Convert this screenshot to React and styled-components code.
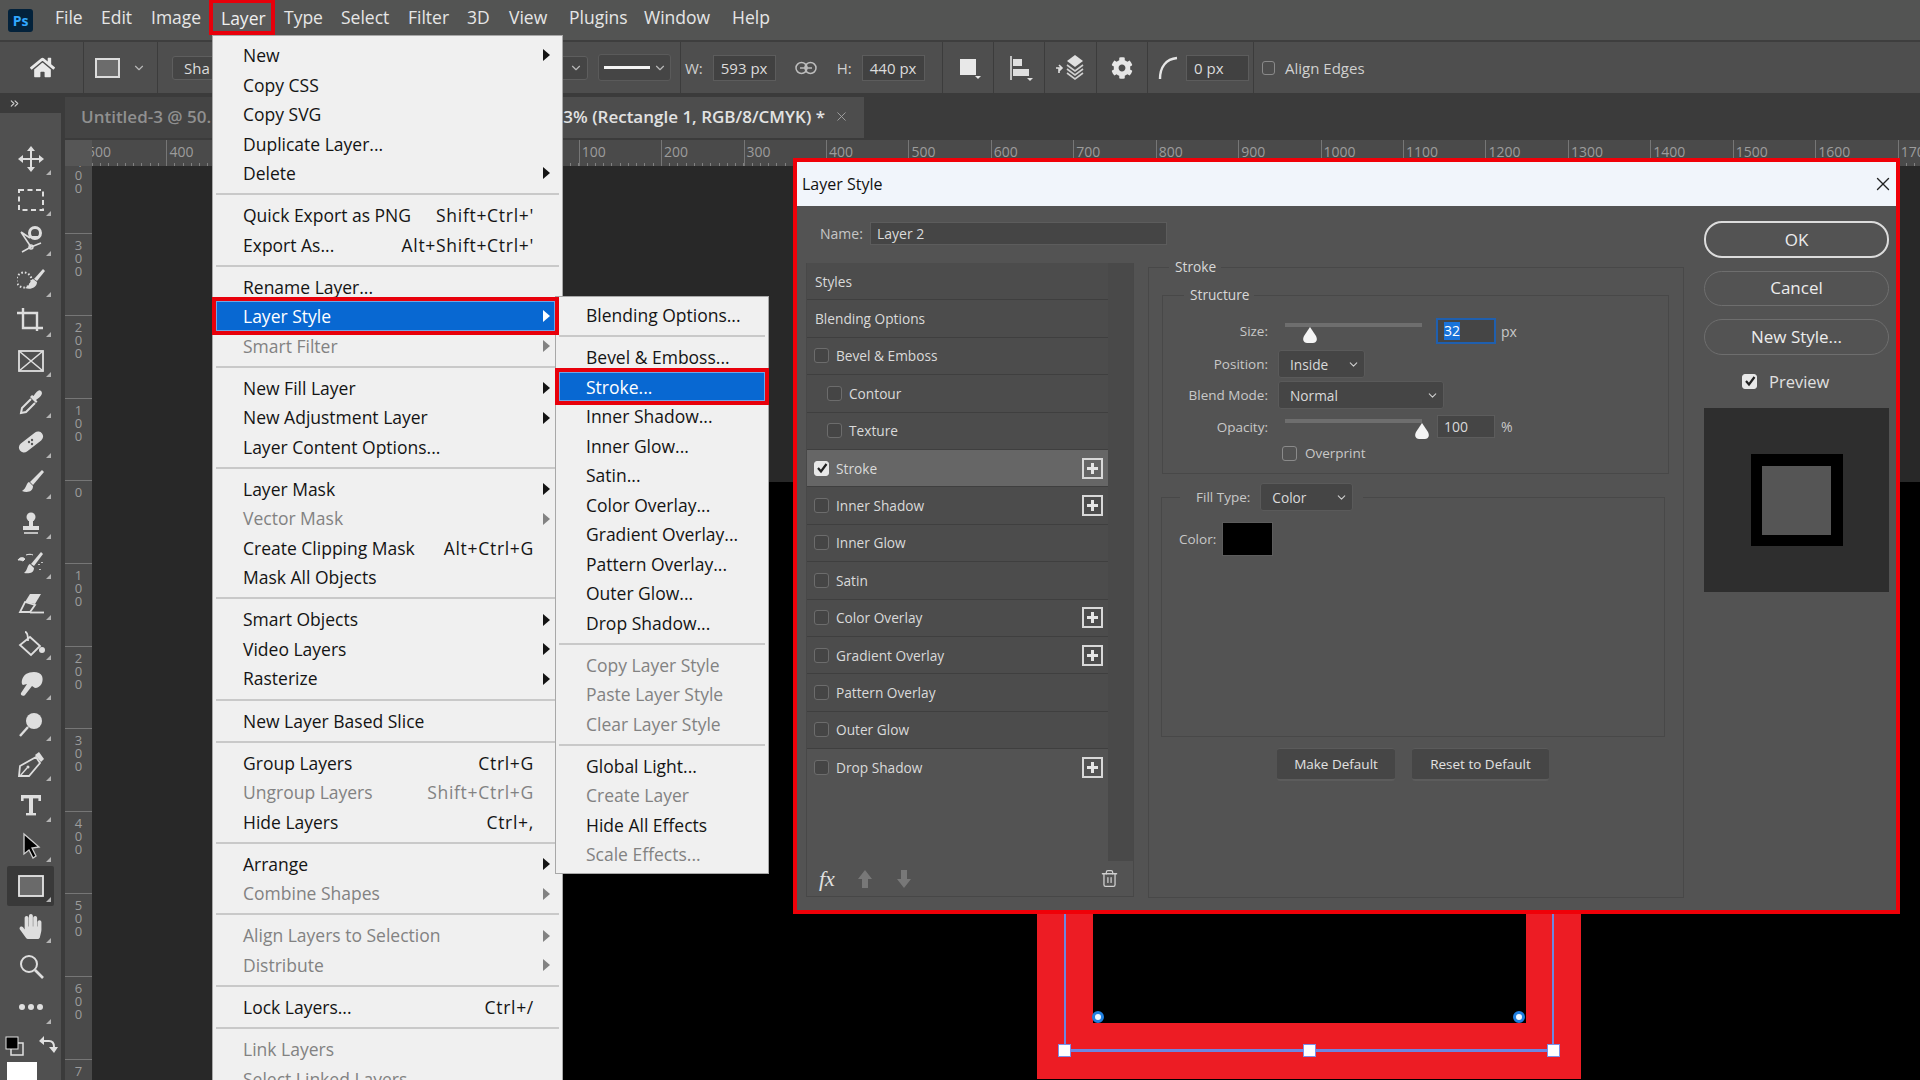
import styled, { createGlobalStyle } from "styled-components";
import { ChevronDown, ChevronsRight, X, Trash2 } from "lucide-react";
import { FaHome, FaCog, FaHandPaper } from "react-icons/fa";

const FONT = `"Open Sans", "Noto Sans", sans-serif`;

const GlobalStyle = createGlobalStyle`
  html, body { margin: 0; padding: 0; background: #282828; }
  * { box-sizing: border-box; }
`;

// data
const topMenu = [
  ["File", 46], ["Edit", 50], ["Image", 67], ["Layer", 66], ["Type", 57],
  ["Select", 67], ["Filter", 59], ["3D", 42], ["View", 60], ["Plugins", 75],
  ["Window", 88], ["Help", 50],
];

const layerMenu = [
  { t: "New", arrow: true }, { t: "Copy CSS" }, { t: "Copy SVG" }, { t: "Duplicate Layer..." },
  { t: "Delete", arrow: true }, "-",
  { t: "Quick Export as PNG", key: "Shift+Ctrl+'" }, { t: "Export As...", key: "Alt+Shift+Ctrl+'" }, "-",
  { t: "Rename Layer..." }, { t: "Layer Style", arrow: true, on: true }, { t: "Smart Filter", arrow: true, off: true }, "-",
  { t: "New Fill Layer", arrow: true }, { t: "New Adjustment Layer", arrow: true }, { t: "Layer Content Options..." }, "-",
  { t: "Layer Mask", arrow: true }, { t: "Vector Mask", arrow: true, off: true },
  { t: "Create Clipping Mask", key: "Alt+Ctrl+G" }, { t: "Mask All Objects" }, "-",
  { t: "Smart Objects", arrow: true }, { t: "Video Layers", arrow: true }, { t: "Rasterize", arrow: true }, "-",
  { t: "New Layer Based Slice" }, "-",
  { t: "Group Layers", key: "Ctrl+G" }, { t: "Ungroup Layers", key: "Shift+Ctrl+G", off: true }, { t: "Hide Layers", key: "Ctrl+," }, "-",
  { t: "Arrange", arrow: true }, { t: "Combine Shapes", arrow: true, off: true }, "-",
  { t: "Align Layers to Selection", arrow: true, off: true }, { t: "Distribute", arrow: true, off: true }, "-",
  { t: "Lock Layers...", key: "Ctrl+/" }, "-",
  { t: "Link Layers", off: true }, { t: "Select Linked Layers", off: true },
];

const styleMenu = [
  { t: "Blending Options..." }, "-",
  { t: "Bevel & Emboss..." }, { t: "Stroke...", on: true }, { t: "Inner Shadow..." }, { t: "Inner Glow..." },
  { t: "Satin..." }, { t: "Color Overlay..." }, { t: "Gradient Overlay..." }, { t: "Pattern Overlay..." },
  { t: "Outer Glow..." }, { t: "Drop Shadow..." }, "-",
  { t: "Copy Layer Style", off: true }, { t: "Paste Layer Style", off: true }, { t: "Clear Layer Style", off: true }, "-",
  { t: "Global Light..." }, { t: "Create Layer", off: true }, { t: "Hide All Effects" }, { t: "Scale Effects...", off: true },
];

const styleRows = [
  { t: "Styles", plain: true }, { t: "Blending Options", plain: true },
  { t: "Bevel & Emboss" }, { t: "Contour", indent: true }, { t: "Texture", indent: true },
  { t: "Stroke", on: true, plus: true }, { t: "Inner Shadow", plus: true }, { t: "Inner Glow" }, { t: "Satin" },
  { t: "Color Overlay", plus: true }, { t: "Gradient Overlay", plus: true }, { t: "Pattern Overlay" },
  { t: "Outer Glow" }, { t: "Drop Shadow", plus: true },
];

// labels that sit behind the open menu are left out
const hTicks = ["500", "400", "", "", "", "", "100", "200", "300", "400", "500", "600", "700", "800", "900", "1000", "1100", "1200", "1300", "1400", "1500", "1600", "1700", "1800"];
const vTicks = ["400", "300", "200", "100", "0", "100", "200", "300", "400", "500", "600", "700"];

// tool icons, 28x28 box
const C = "#dedede";
const toolIcons = {
  move: (
    <>
      <path d="M14 5v18M5 14h18" stroke={C} strokeWidth="2" />
      <path d="M14 1l4 5h-8zM14 27l4-5h-8zM1 14l5-4v8zM27 14l-5-4v8z" fill={C} />
    </>
  ),
  marquee: <rect x="2" y="4" width="24" height="20" fill="none" stroke={C} strokeWidth="2" strokeDasharray="5 3.5" />,
  object: (
    <>
      <path d="M4 6L14 21L5 26M4 6L13 12M14 21L24 17" fill="none" stroke={C} strokeWidth="1.6" />
      <circle cx="18" cy="7" r="5.5" fill="none" stroke={C} strokeWidth="3" />
      <path d="M13 10h10v2H13z" fill={C} />
      <circle cx="14" cy="21" r="2" fill="none" stroke={C} strokeWidth="1.4" />
    </>
  ),
  quick: (
    <>
      <circle cx="7" cy="14" r="7.5" fill="none" stroke={C} strokeWidth="2" strokeDasharray="1.6 2" />
      <path d="M26 3l2 2-8 10-3-2z" fill={C} />
      <path d="M16 13c-3 1-3 7-8 9 5 2 12 0 12-6z" fill={C} />
    </>
  ),
  crop: <path d="M0 6H20V24M6 1V21H26" fill="none" stroke={C} strokeWidth="2.4" />,
  frame: (
    <>
      <rect x="2" y="4" width="24" height="20" fill="none" stroke={C} strokeWidth="1.8" />
      <path d="M2 4L26 24M26 4L2 24" stroke={C} strokeWidth="1.6" />
    </>
  ),
  dropper: (
    <>
      <path d="M14 11L5 20L4 25L9 24L18 15" fill="none" stroke={C} strokeWidth="2" />
      <path d="M13 9L19 15L20.5 13.5L19 12C25 8 26 5 24 3C22 1 20 3 16.5 8L15 7Z" fill={C} />
    </>
  ),
  bandage: (
    <>
      <rect x="0" y="9" width="28" height="10" rx="5" fill={C} transform="rotate(-38 14 14)" />
      <circle cx="12" cy="14" r="1.2" fill="#555" />
      <circle cx="15" cy="12" r="1.2" fill="#555" />
      <circle cx="15" cy="16" r="1.2" fill="#555" />
    </>
  ),
  brush: (
    <>
      <path d="M25 2l2 2-11 13-3-3z" fill={C} />
      <path d="M12 14c-3 1-2 6-7 9 5 2 11 1 11-5z" fill={C} />
    </>
  ),
  stamp: (
    <>
      <circle cx="14" cy="8" r="4.5" fill={C} />
      <path d="M12 11h4v6h6v4H6v-4h6z" fill={C} />
      <path d="M7 24h14" stroke={C} strokeWidth="1.6" />
    </>
  ),
  history: (
    <>
      <path d="M24 3l2 2-9 12-3-2z" fill={C} />
      <path d="M13 15c-3 1-2 6-6 9 5 1 10 0 10-5z" fill={C} />
      <path d="M1 11c2-3 5-3 7-1l-2 2c-2-1-3-1-5-1zM9 6c3-1 5-1 7 0" fill={C} stroke={C} strokeWidth="1" />
      <path d="M22 15v1M25 13v1M23 20v1" stroke={C} strokeWidth="1.6" />
    </>
  ),
  eraser: (
    <>
      <path d="M13 5L24 5L18 15L8 13Z" fill={C} />
      <path d="M8 13L18 16L13 23H3Z" fill="none" stroke={C} strokeWidth="1.8" />
      <path d="M13 23.5H27" stroke={C} strokeWidth="1.8" />
    </>
  ),
  bucket: (
    <>
      <path d="M13 7L23 16L14 25L3 15Z" fill="none" stroke={C} strokeWidth="1.8" />
      <path d="M8 2c3 0 3 5 3 9" fill="none" stroke={C} strokeWidth="1.8" />
      <circle cx="25" cy="20" r="3" fill={C} />
    </>
  ),
  smudge: (
    <path d="M9 4c5-3 14-3 16 2 2 5-1 12-7 12l-3-2-7 9c-2 2-5 0-4-2l6-9-4 1C4 14 4 8 9 4z" fill={C} />
  ),
  dodge: (
    <>
      <circle cx="17" cy="10" r="8" fill={C} />
      <path d="M11 16L3 25" stroke={C} strokeWidth="2.4" />
    </>
  ),
  pen: (
    <>
      <path d="M19 6L3 15L2 25L12 25L23 12Z" fill="none" stroke={C} strokeWidth="1.8" />
      <path d="M18 4L22 1L27 8L24 11Z" fill={C} />
      <path d="M3 25L10 17" stroke={C} strokeWidth="1.4" />
      <circle cx="11" cy="16" r="1.5" fill={C} />
    </>
  ),
  type: (
    <>
      <rect x="4" y="4" width="20" height="3.4" fill={C} />
      <rect x="4" y="4" width="2.6" height="6" fill={C} />
      <rect x="21.4" y="4" width="2.6" height="6" fill={C} />
      <rect x="12" y="4" width="4" height="20" fill={C} />
      <rect x="9" y="22" width="10" height="2.4" fill={C} />
    </>
  ),
  path: <path d="M7 2L22 15L15 16L19 24L16 26L12 18L7 22Z" fill="#000" stroke="#cfcfcf" strokeWidth="1.3" />,
  rect: <rect x="2" y="4" width="24" height="20" fill="#6a6a6a" stroke="#e6e6e6" strokeWidth="1.8" />,
  zoom: (
    <>
      <circle cx="12" cy="11" r="8" fill="none" stroke={C} strokeWidth="2" />
      <path d="M18 17L26 25" stroke={C} strokeWidth="2.6" />
    </>
  ),
  more: (
    <>
      <circle cx="5" cy="14" r="3" fill={C} />
      <circle cx="14" cy="14" r="3" fill={C} />
      <circle cx="23" cy="14" r="3" fill={C} />
    </>
  ),
};

const tools = [
  "move", "marquee", "object", "quick", "crop", "frame", "dropper", "bandage", "brush", "stamp", "history",
  "eraser", "bucket", "smudge", "dodge", "pen", "type", "path", "rect", "hand", "zoom", "more",
];

const Menu = ({ items, as: Comp }) => (
  <Comp>
    {items.map((it, i) =>
      it === "-" ? (
        <MenuSep key={i} />
      ) : (
        <MenuItem key={i} $on={it.on} $off={it.off}>
          <span>{it.t}</span>
          {it.key && <ShortcutKey>{it.key}</ShortcutKey>}
          {it.arrow && <MenuArrow $on={it.on} $off={it.off} />}
        </MenuItem>
      )
    )}
  </Comp>
);

const Thumb = ({ at }) => (
  <ThumbIcon $at={at} width="16" height="17" viewBox="0 0 16 17">
    <path d="M8 0L14 9C16 13 14 16 11 16H5C2 16 0 13 2 9Z" fill="#f4f4f4" />
  </ThumbIcon>
);

const Select = ({ w, children }) => (
  <SelectBox $w={w}>
    {children}
    <ChevronDown size={13} color="#cfcfcf" />
  </SelectBox>
);

export default function App() {
  return (
    <Page>
      <GlobalStyle />

      <MenuBar>
        <PsLogo>Ps</PsLogo>
        {topMenu.map(([name, w]) => (
          <TopItem key={name} $w={w} $on={name === "Layer"}>
            {name}
          </TopItem>
        ))}
      </MenuBar>

      <OptionsBar>
        <OptGroup $w={84} $pad={30}>
          <FaHome size={25} color="#e8e8e8" />
        </OptGroup>
        <OptGroup $w={74} $pad={11}>
          <ShapeSwatch />
          <ChevronDown size={14} color="#b8b8b8" />
        </OptGroup>
        <OptGroup $w={523} $pad={14}>
          <ShapeSelect>
            Sha
            <ChevronDown size={14} color="#b8b8b8" />
          </ShapeSelect>
          <LineSelect>
            <LineSample />
            <ChevronDown size={14} color="#b8b8b8" />
          </LineSelect>
        </OptGroup>
        <OptGroup $w={262} $pad={4}>
          <OptLabel>W:</OptLabel>
          <OptInput>593 px</OptInput>
          <LinkIcon width="24" height="14" viewBox="0 0 24 14">
            <circle cx="7.5" cy="7" r="5.5" fill="none" stroke="#bdbdbd" strokeWidth="1.5" />
            <circle cx="16.5" cy="7" r="5.5" fill="none" stroke="#bdbdbd" strokeWidth="1.5" />
            <path d="M6 7h12" stroke="#bdbdbd" strokeWidth="1.5" />
          </LinkIcon>
          <OptLabel>H:</OptLabel>
          <OptInput>440 px</OptInput>
        </OptGroup>
        <OptGroup $w={51} $pad={16}>
          <svg width="24" height="22" viewBox="0 0 24 22">
            <rect x="1" y="2" width="16" height="16" fill="#e8e8e8" />
            <path d="M16 19h6l-3 3z" fill="#e8e8e8" />
          </svg>
        </OptGroup>
        <OptGroup $w={51} $pad={16}>
          <svg width="24" height="26" viewBox="0 0 24 26">
            <path d="M1 1v24" stroke="#e0e0e0" strokeWidth="1.6" />
            <rect x="3" y="4" width="9" height="7" fill="#e0e0e0" />
            <rect x="3" y="14" width="16" height="7" fill="#e0e0e0" />
            <path d="M17 23h6l-3 3z" fill="#e0e0e0" />
          </svg>
        </OptGroup>
        <OptGroup $w={52} $pad={10}>
          <svg width="32" height="30" viewBox="0 0 32 30">
            <path d="M1 15h6M4 12l3 3-3 3M4 15v5" stroke="#e0e0e0" strokeWidth="1.6" fill="none" />
            <path d="M20 2l8 6-8 6-8-6z" fill="#e0e0e0" />
            <path d="M12 12l8 6 8-6M12 16l8 6 8-6M12 20l8 6 8-6" stroke="#d0d0d0" strokeWidth="1.6" fill="none" />
          </svg>
        </OptGroup>
        <OptGroup $w={51} $pad={14}>
          <FaCog size={22} color="#e6e6e6" />
        </OptGroup>
        <OptGroup $w={106} $pad={10}>
          <svg width="20" height="24" viewBox="0 0 20 24">
            <path d="M2 23C2 11 8 3 19 2" fill="none" stroke="#e6e6e6" strokeWidth="2.4" />
          </svg>
          <OptInput $w={63} $ml={8}>
            0 px
          </OptInput>
        </OptGroup>
        <OptGroup $pad={8} $last>
          <OptCheck />
          <OptLabel $ml={10}>Align Edges</OptLabel>
        </OptGroup>
      </OptionsBar>

      <Workspace>
        <ToolColumn>
          <ToolHeader>
            <ChevronsRight size={13} color="#d0d0d0" />
          </ToolHeader>
          <ToolPanel>
            {tools.map((name) => (
              <ToolButton key={name} $on={name === "rect"} $noCorner={name === "zoom"}>
                {name === "hand" ? (
                  <FaHandPaper size={25} color={C} />
                ) : (
                  <svg width="28" height="28" viewBox="0 0 28 28">
                    {toolIcons[name]}
                  </svg>
                )}
              </ToolButton>
            ))}
            <SwatchArea>
              <SwatchTop>
                <svg width="20" height="20" viewBox="0 0 20 20">
                  <rect x="6" y="7" width="12" height="12" fill="none" stroke="#e0e0e0" strokeWidth="1.5" />
                  <rect x="1" y="1" width="12" height="12" fill="#000" stroke="#e0e0e0" strokeWidth="1" />
                </svg>
                <svg width="20" height="20" viewBox="0 0 20 20">
                  <path d="M3 5h8c3 0 5 2 5 6" fill="none" stroke="#e0e0e0" strokeWidth="2" />
                  <path d="M6 0L1 5l5 4zM11 11l5 6 4-6z" fill="#e0e0e0" />
                </svg>
              </SwatchTop>
              <ForeSwatch />
            </SwatchArea>
          </ToolPanel>
        </ToolColumn>

        <MainColumn>
          <TabRow>
            <DocTab $w={405} $dim>
              Untitled-3 @ 50.
            </DocTab>
            <DocTab $w={394} $end>
              3% (Rectangle 1, RGB/8/CMYK) *
              <X size={15} color="#a8a8a8" strokeWidth={1.4} />
            </DocTab>
          </TabRow>

          <RulerRow>
            <RulerCorner />
            <HRuler>
              {hTicks.map((n, i) => (
                <HTick key={i}>{n}</HTick>
              ))}
            </HRuler>
          </RulerRow>

          <CanvasRow>
            <VRuler>
              {vTicks.map((n, i) => (
                <VTick key={i}>
                  {n.split("").map((d, j) => (
                    <span key={j}>{d}</span>
                  ))}
                </VTick>
              ))}
            </VRuler>
            <Canvas>
              <Artboard>
                <RedFrame>
                  <PathLine />
                  <PathHandle $at="left" />
                  <PathHandle $at="mid" />
                  <PathHandle $at="right" />
                  <Corner $at="left" />
                  <Corner $at="right" />
                </RedFrame>
              </Artboard>
            </Canvas>
          </CanvasRow>
        </MainColumn>
      </Workspace>

      <Menu items={layerMenu} as={LayerMenuBox} />
      <Menu items={styleMenu} as={StyleMenuBox} />

      <Dialog>
        <DialogTitle>
          Layer Style
          <X size={22} color="#222" strokeWidth={1.5} />
        </DialogTitle>
        <DialogBody>
          <LeftColumn>
            <NameRow>
              <NameLabel>Name:</NameLabel>
              <NameInput>Layer 2</NameInput>
            </NameRow>
            <StyleList>
              <ListTop>
                <Rows>
                  {styleRows.map((r) => (
                    <StyleRow key={r.t} $on={r.on} $plain={r.plain} $indent={r.indent}>
                      {!r.plain && <Check $on={r.on}>{r.on && <CheckMark />}</Check>}
                      <RowText>{r.t}</RowText>
                      {r.plus && <PlusBox />}
                    </StyleRow>
                  ))}
                </Rows>
                <ScrollTrack />
              </ListTop>
              <ListFooter>
                <FxText>fx</FxText>
                <FooterArrow width="16" height="20" viewBox="0 0 16 20" $ml={22}>
                  <path d="M8 1l7 9h-4v9H5v-9H1z" fill="#787878" />
                </FooterArrow>
                <FooterArrow width="16" height="20" viewBox="0 0 16 20" $ml={23}>
                  <path d="M8 19l7-9h-4V1H5v9H1z" fill="#787878" />
                </FooterArrow>
                <TrashSlot>
                  <Trash2 size={19} color="#d0d0d0" strokeWidth={1.6} />
                </TrashSlot>
              </ListFooter>
            </StyleList>
          </LeftColumn>

          <StrokeSet>
            <SetLegend $ml={6}>Stroke</SetLegend>
            <StructureSet>
              <SetLegend $ml={20}>Structure</SetLegend>
              <FormRow $h={24} $top={14}>
                <FormLabel>Size:</FormLabel>
                <Slider>
                  <Thumb at={17} />
                </Slider>
                <ValueBox $sel>
                  <Selected>32</Selected>
                </ValueBox>
                <Unit>px</Unit>
              </FormRow>
              <FormRow $h={28} $top={7}>
                <FormLabel>Position:</FormLabel>
                <Select w={87}>Inside</Select>
              </FormRow>
              <FormRow $h={28} $top={3}>
                <FormLabel>Blend Mode:</FormLabel>
                <Select w={166}>Normal</Select>
              </FormRow>
              <FormRow $h={23} $top={6}>
                <FormLabel>Opacity:</FormLabel>
                <Slider>
                  <Thumb at={129} />
                </Slider>
                <ValueBox>100</ValueBox>
                <Unit>%</Unit>
              </FormRow>
              <FormRow $h={22} $top={4}>
                <FormLabel />
                <SmallCheck />
                <FormText>Overprint</FormText>
              </FormRow>
            </StructureSet>

            <FillSet>
              <FillLegend>
                <FormText>Fill Type:</FormText>
                <Select w={93}>Color</Select>
              </FillLegend>
              <ColorRow>
                <FormText>Color:</FormText>
                <ColorSwatch />
              </ColorRow>
            </FillSet>

            <DefaultsRow>
              <FlatButton $w={118}>Make Default</FlatButton>
              <FlatButton $w={137}>Reset to Default</FlatButton>
            </DefaultsRow>
          </StrokeSet>

          <RightColumn>
            <PillButton $h={37} $primary>
              OK
            </PillButton>
            <PillButton $h={35}>Cancel</PillButton>
            <PillButton $h={36}>New Style...</PillButton>
            <PreviewRow>
              <Check $on>
                <CheckMark />
              </Check>
              Preview
            </PreviewRow>
            <PreviewBox>
              <PreviewShape />
            </PreviewBox>
          </RightColumn>
        </DialogBody>
      </Dialog>
    </Page>
  );
}

const CheckMark = () => (
  <svg width="12" height="12" viewBox="0 0 12 12">
    <path d="M2 6l3 3.5L10.5 2" fill="none" stroke="#222" strokeWidth="2.2" />
  </svg>
);

const Page = styled.div`
  position: relative;
  width: 1920px;
  height: 1080px;
  overflow: hidden;
  display: flex;
  flex-direction: column;
  background: #3d3d3d;
  font-family: ${FONT};
`;

const MenuBar = styled.div`
  height: 42px;
  flex: none;
  display: flex;
  align-items: center;
  padding-left: 8px;
  background: #535453;
  border-bottom: 2px solid #3e3e3e;
`;

const PsLogo = styled.div`
  width: 25px;
  height: 23px;
  margin-right: 13px;
  border-radius: 3px;
  background: #03223b;
  color: #31a8ff;
  font-size: 14px;
  font-weight: 700;
  line-height: 23px;
  text-align: center;
`;

const TopItem = styled.div`
  width: ${(p) => p.$w}px;
  height: 35px;
  margin-top: -6px;
  padding-left: 9px;
  color: #e6e6e6;
  font-size: 17.5px;
  line-height: 35px;
  ${(p) =>
    p.$on &&
    `border: 4px solid #e8000b; border-top-width: 3px; line-height: 30px; background: #5a5a5a; color: #f0f0f0; padding-left: 8px;`}
`;

const OptionsBar = styled.div`
  height: 51px;
  flex: none;
  display: flex;
  background: #4e4e4e;
`;

const OptGroup = styled.div`
  flex: ${(p) => (p.$w ? "none" : 1)};
  width: ${(p) => (p.$w ? `${p.$w}px` : "auto")};
  display: flex;
  align-items: center;
  padding-left: ${(p) => p.$pad}px;
  ${(p) => !p.$last && `border-right: 1px solid #3c3c3c;`}
`;

const ShapeSwatch = styled.div`
  width: 25px;
  height: 20px;
  margin-right: 12px;
  background: #6c6c6c;
  border: 2px solid #dcdcdc;
`;

const ShapeSelect = styled.div`
  width: 416px;
  height: 24px;
  display: flex;
  align-items: center;
  justify-content: space-between;
  padding: 0 4px 0 11px;
  border: 1px solid #5e5e5e;
  border-radius: 3px;
  background: #454545;
  color: #dcdcdc;
  font-size: 15px;
`;

const LineSelect = styled.div`
  width: 73px;
  height: 27px;
  margin-left: 10px;
  display: flex;
  align-items: center;
  padding-left: 5px;
  gap: 3px;
  border: 1px solid #5a5a5a;
  border-radius: 3px;
  background: #454545;
`;

const LineSample = styled.div`
  width: 46px;
  height: 3px;
  background: #f4f4f4;
`;

const OptLabel = styled.span`
  margin-left: ${(p) => p.$ml || 0}px;
  margin-right: 10px;
  color: #d0d0d0;
  font-size: 15px;
`;

const OptInput = styled.div`
  width: ${(p) => p.$w || 63}px;
  height: 26px;
  margin-left: ${(p) => p.$ml || 0}px;
  padding-left: 7px;
  background: #414141;
  border: 1px solid #5c5c5c;
  color: #dcdcdc;
  font-size: 15px;
  line-height: 24px;
`;

const LinkIcon = styled.svg`
  flex: none;
  margin: 0 19px 0 18px;
`;

const OptCheck = styled.div`
  width: 13px;
  height: 14px;
  border: 1px solid #8a8a8a;
  border-radius: 3px;
`;

const Workspace = styled.div`
  flex: 1;
  min-height: 0;
  display: flex;
  background: #3b3b3b;
`;

const ToolColumn = styled.div`
  width: 61px;
  flex: none;
  margin-right: 4px;
  display: flex;
  flex-direction: column;
`;

const ToolHeader = styled.div`
  height: 20px;
  flex: none;
  display: flex;
  align-items: flex-end;
  padding: 0 0 3px 8px;
`;

const ToolPanel = styled.div`
  flex: 1;
  padding-top: 26px;
  background: #505050;
`;

const ToolButton = styled.div`
  position: relative;
  width: 47px;
  height: 40.4px;
  margin-left: 7px;
  display: flex;
  align-items: center;
  justify-content: center;
  border-radius: 2px;
  ${(p) => p.$on && `background: #393939;`}

  &::after {
    content: "";
    position: absolute;
    right: 3px;
    bottom: 4px;
    border-style: solid;
    border-width: 0 0 5px 5px;
    border-color: transparent transparent #b4b4b4 transparent;
    ${(p) => p.$noCorner && `display: none;`}
  }
`;

const SwatchArea = styled.div`
  padding: 8px 0 0 5px;
`;

const SwatchTop = styled.div`
  display: flex;
  gap: 13px;
`;

const ForeSwatch = styled.div`
  width: 30px;
  height: 30px;
  margin: 6px 0 0 2px;
  background: #fff;
`;

const MainColumn = styled.div`
  flex: 1;
  min-width: 0;
  padding-top: 4px;
  display: flex;
  flex-direction: column;
`;

const TabRow = styled.div`
  height: 41px;
  flex: none;
  display: flex;
  margin-bottom: 2px;
`;

const DocTab = styled.div`
  width: ${(p) => p.$w}px;
  display: flex;
  align-items: center;
  justify-content: ${(p) => (p.$end ? "flex-end" : "flex-start")};
  gap: 9px;
  padding: ${(p) => (p.$end ? "0 15px 2px 0" : "0 0 2px 16px")};
  background: ${(p) => (p.$dim ? "#444" : "#4d4d4d")};
  color: ${(p) => (p.$dim ? "#909090" : "#e2e2e2")};
  font-size: 17px;
  font-weight: 600;
  white-space: nowrap;
  overflow: hidden;

  svg {
    flex: none;
  }
`;

const RulerRow = styled.div`
  height: 26px;
  flex: none;
  display: flex;
  background: #4a4a4a;
`;

const RulerCorner = styled.div`
  width: 27px;
  flex: none;
  background: #565656;
`;

const HRuler = styled.div`
  flex: 1;
  min-width: 0;
  display: flex;
  overflow: hidden;
  background: repeating-linear-gradient(90deg, #808080 0 1px, transparent 1px 8.245px) 0 100% / 100% 3px no-repeat;
`;

const HTick = styled.div`
  flex: none;
  width: 82.45px;
  padding: 3px 0 0 2px;
  border-left: 1px solid #767676;
  color: #9c9c9c;
  font-size: 14px;
  line-height: 18px;

  &:first-child {
    margin-left: -8px;
  }
`;

const CanvasRow = styled.div`
  flex: 1;
  min-height: 0;
  display: flex;
`;

const VRuler = styled.div`
  width: 27px;
  flex: none;
  overflow: hidden;
  background: #4a4a4a;
`;

const VTick = styled.div`
  height: 82.6px;
  display: flex;
  flex-direction: column;
  align-items: center;
  padding-top: 5px;
  border-top: 1px solid #767676;
  color: #9c9c9c;
  font-size: 13px;
  line-height: 13px;

  &:first-child {
    margin-top: -16px;
  }
`;

const Canvas = styled.div`
  position: relative;
  flex: 1;
  min-width: 0;
  background: #282828;
`;

const Artboard = styled.div`
  position: absolute;
  left: 468px;
  right: 0;
  top: 316px;
  bottom: 0;
  background: #000;
`;

const RedFrame = styled.div`
  position: absolute;
  left: 477px;
  top: 0;
  width: 544px;
  height: 597px;
  background: #ed1c24;

  &::before {
    content: "";
    position: absolute;
    left: 56px;
    right: 55px;
    top: 0;
    bottom: 56px;
    background: #000;
  }
`;

const PathLine = styled.div`
  position: absolute;
  left: 27px;
  width: 490px;
  top: 0;
  height: 570px;
  border: 2px solid #6e86e0;
  border-top: none;
  border-bottom-width: 3px;
`;

const PathHandle = styled.div`
  position: absolute;
  top: 562px;
  left: ${(p) => ({ left: 21, mid: 266, right: 510 })[p.$at]}px;
  width: 13px;
  height: 13px;
  background: #fff;
  border: 1px solid #7c8fe6;
`;

const Corner = styled.div`
  position: absolute;
  top: 529px;
  left: ${(p) => ({ left: 55, right: 476 })[p.$at]}px;
  width: 12px;
  height: 12px;
  border-radius: 50%;
  background: #f2f8ff;
  border: 3.5px solid #1f7fe0;
`;

const MenuBase = styled.div`
  position: absolute;
  background: #f0f0f0;
  border: 1px solid #a8a8a8;
  color: #141414;
  font-size: 17.5px;
`;

const LayerMenuBox = styled(MenuBase)`
  left: 212px;
  top: 35px;
  width: 351px;
  padding-top: 4.25px;
  height: 1080px;
  --right-margin: 7px;
`;

const StyleMenuBox = styled(MenuBase)`
  left: 555px;
  top: 296px;
  width: 214px;
  height: 578px;
  padding-top: 3.25px;
  z-index: 3;
  --right-margin: 3px;
`;

const MenuItem = styled.div`
  position: relative;
  height: 29.5px;
  margin: 0 var(--right-margin) 0 3px;
  padding: 0 21px 0 27px;
  display: flex;
  align-items: center;
  justify-content: space-between;
  white-space: nowrap;
  color: ${(p) => (p.$on ? "#fff" : p.$off ? "#828282" : "#141414")};
  ${(p) =>
    p.$on &&
    `background: #0868d2; outline: 4px solid #e8000b; z-index: 5; box-shadow: inset 0 0 0 1px #6ea6e6;`}
`;

const ShortcutKey = styled.span`
  letter-spacing: 0.7px;
`;

const MenuArrow = styled.i`
  position: absolute;
  right: 5px;
  top: 9px;
  border-style: solid;
  border-width: 6px 0 6px 7px;
  border-color: transparent transparent transparent
    ${(p) => (p.$on ? "#fff" : p.$off ? "#828282" : "#141414")};
`;

const MenuSep = styled.div`
  height: 2px;
  margin: 5.3px 3px;
  background: #c9c9c9;
`;

const Dialog = styled.div`
  position: absolute;
  left: 793px;
  top: 158px;
  width: 1107px;
  height: 756px;
  z-index: 6;
  display: flex;
  flex-direction: column;
  border: 4px solid #f00008;
  background: #535353;
  color: #dadada;
`;

const DialogTitle = styled.div`
  height: 44px;
  flex: none;
  display: flex;
  align-items: center;
  justify-content: space-between;
  padding: 0 2px 0 5px;
  background: #f1f5fb;
  color: #111;
  font-size: 16px;
`;

const DialogBody = styled.div`
  flex: 1;
  min-height: 0;
  display: flex;
  align-items: flex-start;
  padding-left: 9px;
`;

const LeftColumn = styled.div`
  width: 328px;
  flex: none;
  padding-top: 16px;
`;

const NameRow = styled.div`
  display: flex;
  align-items: center;
  padding-left: 14px;
`;

const NameLabel = styled.span`
  width: 50px;
  flex: none;
  color: #c6c6c6;
  font-size: 14px;
`;

const NameInput = styled.div`
  width: 297px;
  height: 23px;
  flex: none;
  padding-left: 6px;
  background: #454545;
  border: 1px solid #5c5c5c;
  color: #dadada;
  font-size: 14px;
  line-height: 21px;
`;

const StyleList = styled.div`
  margin-top: 18px;
  height: 634px;
  border-left: 1px solid #484848;
  border-bottom: 1px solid #474747;
  border-right: 1px solid #484848;
  display: flex;
  flex-direction: column;
`;

const ListTop = styled.div`
  height: 598px;
  flex: none;
  display: flex;
`;

const Rows = styled.div`
  width: 301px;
  flex: none;
`;

const StyleRow = styled.div`
  height: 37.4px;
  display: flex;
  align-items: center;
  padding: 0 5px 0 ${(p) => (p.$plain ? 8 : p.$indent ? 20 : 7)}px;
  border-bottom: 1px solid #3f3f3f;
  background: ${(p) => (p.$on ? "#666" : "#4c4c4c")};
  font-size: 14px;

  &:last-child {
    background: none;
    border-bottom: none;
  }
`;

const Check = styled.div`
  width: 15px;
  height: 15px;
  flex: none;
  margin-right: 7px;
  display: flex;
  align-items: center;
  justify-content: center;
  border-radius: 3px;
  border: 1px solid ${(p) => (p.$on ? "#e8e8e8" : "#6c6c6c")};
  background: ${(p) => (p.$on ? "#e8e8e8" : "#454545")};
`;

const SmallCheck = styled(Check)`
  margin: 0 8px 0 4px;
  background: none;
  border-color: #8a8a8a;
`;

const RowText = styled.span`
  flex: 1;
  color: #dadada;
  font-size: 13.7px;
`;

const PlusBox = styled.div`
  position: relative;
  width: 21px;
  height: 21px;
  flex: none;
  border: 2px solid #d8d8d8;

  &::before,
  &::after {
    content: "";
    position: absolute;
    background: #e6e6e6;
  }
  &::before {
    left: 3px;
    right: 3px;
    top: 7px;
    height: 3px;
  }
  &::after {
    top: 3px;
    bottom: 3px;
    left: 7px;
    width: 3px;
  }
`;

const ScrollTrack = styled.div`
  flex: 1;
  background: #494949;
`;

const ListFooter = styled.div`
  flex: 1;
  display: flex;
  align-items: center;
  padding: 0 14px 0 12px;
`;

const FxText = styled.span`
  color: #e0e0e0;
  font-family: "Liberation Serif", serif;
  font-size: 22px;
  font-style: italic;
`;

const FooterArrow = styled.svg`
  margin-left: ${(p) => p.$ml}px;
`;

const TrashSlot = styled.div`
  margin-left: auto;
  display: flex;
`;

const StrokeSet = styled.fieldset`
  width: 536px;
  height: 641px;
  flex: none;
  margin: 51px 0 0 14px;
  padding: 8px 14px 0;
  min-inline-size: 0;
  border: 1px solid #484848;
`;

const SetLegend = styled.legend`
  margin-left: ${(p) => p.$ml}px;
  padding: 0 5px 0 6px;
  color: #d8d8d8;
  font-size: 13.7px;
  line-height: 20px;
`;

const StructureSet = styled.fieldset`
  margin: 0 0 0 -1px;
  height: 189px;
  padding: 0 0 0 1px;
  min-inline-size: 0;
  border: 1px solid #484848;
`;

const FormRow = styled.div`
  height: ${(p) => p.$h}px;
  margin-top: ${(p) => p.$top}px;
  display: flex;
  align-items: center;
`;

const FormLabel = styled.span`
  width: 104px;
  flex: none;
  margin-right: 10px;
  text-align: right;
  color: #c8c8c8;
  font-size: 13.5px;
`;

const FormText = styled.span`
  color: #c8c8c8;
  font-size: 13.5px;
`;

const Slider = styled.div`
  position: relative;
  width: 137px;
  height: 100%;
  flex: none;
  margin: 0 15px 0 7px;

  &::before {
    content: "";
    position: absolute;
    left: 0;
    right: 0;
    top: 4px;
    height: 4px;
    background: #6e6e6e;
  }
`;

const ThumbIcon = styled.svg`
  position: absolute;
  left: ${(p) => p.$at}px;
  top: 8px;
`;

const ValueBox = styled.div`
  width: 58px;
  height: 100%;
  flex: none;
  display: flex;
  align-items: center;
  padding-left: 6px;
  background: #454545;
  border: 1px solid ${(p) => (p.$sel ? "#1f5fae" : "#5c5c5c")};
  ${(p) => p.$sel && `box-shadow: 0 0 0 1px #1f5fae;`}
  color: #dadada;
  font-size: 14px;
`;

const Selected = styled.span`
  background: #1a73d9;
  color: #fff;
  line-height: 18px;
`;

const Unit = styled.span`
  margin-left: 6px;
  color: #c8c8c8;
  font-size: 14px;
`;

const SelectBox = styled.div`
  width: ${(p) => p.$w}px;
  height: 28px;
  flex: none;
  display: flex;
  align-items: center;
  justify-content: space-between;
  padding: 0 4px 0 11px;
  background: #454545;
  border: 1px solid #5a5a5a;
  border-radius: 3px;
  color: #dadada;
  font-size: 13.7px;
`;

const FillSet = styled.fieldset`
  margin: 9px 0 0 -2px;
  width: 504px;
  height: 254px;
  padding: 11px 0 0 17px;
  min-inline-size: 0;
  border: 1px solid #484848;
`;

const FillLegend = styled.legend`
  margin-left: 1px;
  padding: 0 10px 0 16px;
  display: flex;
  align-items: center;
  gap: 10px;
`;

const ColorRow = styled.div`
  display: flex;
  align-items: center;
  gap: 6px;
`;

const ColorSwatch = styled.div`
  width: 51px;
  height: 34px;
  background: #000;
  border: 1px solid #5c5c5c;
`;

const DefaultsRow = styled.div`
  margin: 11px 0 0 114px;
  display: flex;
  gap: 17px;
`;

const FlatButton = styled.div`
  width: ${(p) => p.$w}px;
  height: 33px;
  background: #464646;
  border-top: 1px solid #5b5b5b;
  border-bottom: 2px solid #5c5c5c;
  border-radius: 3px;
  color: #e2e2e2;
  font-size: 13.5px;
  line-height: 30px;
  text-align: center;
`;

const RightColumn = styled.div`
  width: 185px;
  flex: none;
  margin: 15px 0 0 20px;
  display: flex;
  flex-direction: column;
  gap: 13px;
`;

const PillButton = styled.div`
  height: ${(p) => p.$h}px;
  border-radius: 18px;
  border: ${(p) => (p.$primary ? "2px solid #dcdcdc" : "1.5px solid #6e6e6e")};
  color: #ececec;
  font-size: 17px;
  text-align: center;
  line-height: ${(p) => p.$h - 3}px;
`;

const PreviewRow = styled.div`
  height: 20px;
  margin: 3px 0 4px 38px;
  display: flex;
  align-items: center;
  gap: 5px;
  color: #e0e0e0;
  font-size: 16.5px;
`;

const PreviewBox = styled.div`
  height: 184px;
  display: flex;
  align-items: center;
  justify-content: center;
  background: #2e2e2e;
`;

const PreviewShape = styled.div`
  width: 92px;
  height: 92px;
  background: #555;
  border: solid #000;
  border-width: 12px 12px 11px 11px;
`;
